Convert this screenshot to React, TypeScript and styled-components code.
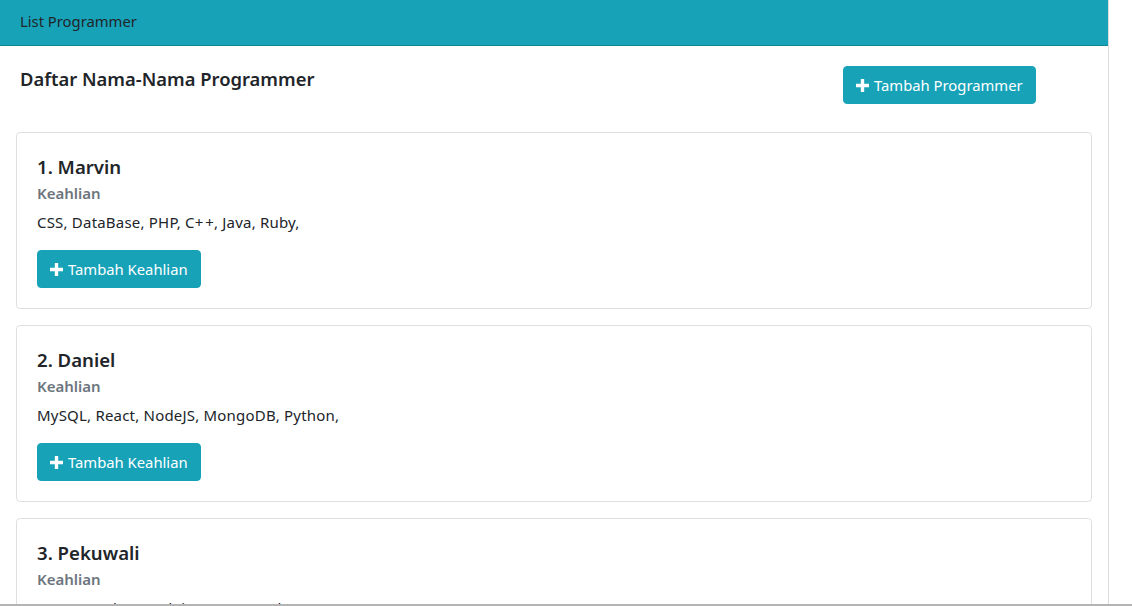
import React from 'react';
import styled, {createGlobalStyle} from 'styled-components';

const GlobalStyle = createGlobalStyle`
  * { box-sizing: border-box; }
  body {
    margin: 0;
    background: #fff;
    font-family: 'Noto Sans', 'Open Sans', sans-serif;
    color: #212529;
  }
`;

const Frame = styled.div`
  display: flex;
  height: 606px;
  border-bottom: solid 2px #b4b4b4;
  overflow: hidden;
`;

const Page = styled.div`
  width: 1109px;
  flex-shrink: 0;
  border-right: solid 1px #dcdcdc;
`;

const Navbar = styled.nav`
  height: 46px;
  display: flex;
  align-items: center;
  padding: 0 20px 3px 20px;
  background-color: #17a2b8;
  border-bottom: solid 1px #138496;
  font-size: 14.8px;
  color: #212529;
`;

const Container = styled.div`
  padding: 0 16px;
`;

const Header = styled.div`
  display: grid;
  grid-template-columns: 823px 1fr;
  align-items: start;
  padding: 20px 4px 28px 4px;
`;

const Heading = styled.h2`
  margin: 0;
  font-size: 18.4px;
  font-weight: 600;
  line-height: 1.4;
`;

const Button = styled.button`
  display: inline-flex;
  align-items: center;
  gap: 5px;
  height: 38px;
  padding: 0 12px;
  border: solid 1px #17a2b8;
  border-radius: 4px;
  background-color: #17a2b8;
  color: #fff;
  font-family: inherit;
  font-size: 14.8px;
  cursor: pointer;
  justify-self: start;
`;

const List = styled.div`
  display: flex;
  flex-direction: column;
  gap: 16px;
`;

const Card = styled.div`
  height: 177px;
  border: solid 1px rgba(0, 0, 0, 0.125);
  border-radius: 4px;
  padding: 22px 20px 20px 20px;
`;

const CardTitle = styled.h5`
  margin: 0 0 6px 0;
  font-size: 18.6px;
  font-weight: 600;
  line-height: 23px;
`;

const CardSubtitle = styled.h6`
  margin: 0 0 9px 0;
  font-size: 15px;
  font-weight: 600;
  line-height: 18px;
  color: #6c757d;
`;

const CardText = styled.p`
  margin: 0 0 17px 0;
  font-size: 15px;
  letter-spacing: 0.2px;
  line-height: 22px;
`;

const PlusIcon = () => (
  <svg width="13" height="13" viewBox="0 0 14 14" aria-hidden="true">
    <path d="M5.2 0h3.6v5.2H14v3.6H8.8V14H5.2V8.8H0V5.2h5.2z" fill="#fff" />
  </svg>
);

const programmers = [
  {name: 'Marvin', skills: ['CSS', 'DataBase', 'PHP', 'C+\u200a+', 'Java', 'Ruby']},
  {name: 'Daniel', skills: ['MySQL', 'React', 'NodeJS', 'MongoDB', 'Python']},
  {name: 'Pekuwali', skills: ['VueJS', 'Docker', 'Nodejs', 'Go', 'Laravel']},
];

export default function App() {
  return (
    <Frame>
      <GlobalStyle />
      <Page>
        <Navbar>List Programmer</Navbar>
        <Container>
          <Header>
            <Heading>Daftar Nama-Nama Programmer</Heading>
            <Button>
              <PlusIcon />
              Tambah Programmer
            </Button>
          </Header>
          <List>
            {programmers.map((p, i) => (
              <Card key={p.name}>
                <CardTitle>
                  {i + 1}. {p.name}
                </CardTitle>
                <CardSubtitle>Keahlian</CardSubtitle>
                <CardText>{p.skills.map((s) => `${s}, `).join('')}</CardText>
                <Button>
                  <PlusIcon />
                  Tambah Keahlian
                </Button>
              </Card>
            ))}
          </List>
        </Container>
      </Page>
    </Frame>
  );
}
